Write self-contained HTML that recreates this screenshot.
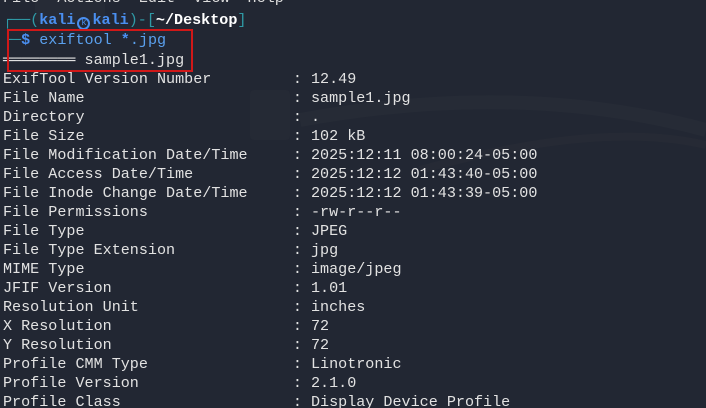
<!DOCTYPE html>
<html><head><meta charset="utf-8"><style>
html,body{margin:0;padding:0;width:706px;height:408px;overflow:hidden;background:#222733;}
body{position:relative;font-family:"Liberation Mono","DejaVu Sans Mono",monospace;font-size:15.1px;color:#e2e2e2;}
.l{position:absolute;left:3px;white-space:pre;line-height:19px;height:19px;}
.t{color:#2f9aa6}.b{color:#4a8ff0;font-weight:bold}.w{color:#fff;font-weight:bold}
.c{color:#5aa0ee}
.at{display:inline-block;width:13px;height:13px;border:2px solid #4a8ff0;border-radius:50%;box-sizing:border-box;vertical-align:-1px;margin:0 2px;font-size:9px;line-height:9px;text-align:center;color:#4a8ff0;}
.box{position:absolute;left:7px;top:29px;width:186px;height:43px;border:2px solid #d01818;box-sizing:border-box;}
.ghost{position:absolute;background:#2a2f3a;border-radius:4px;}
</style></head><body>
<div class="ghost" style="left:35px;top:0;width:70px;height:22px;background:#262b36"></div>
<div class="ghost" style="left:250px;top:90px;width:40px;height:50px;background:#252a35"></div>
<svg style="position:absolute;left:0;top:0" width="706" height="408"><path d="M300 120 Q520 80 706 130" stroke="#262b36" stroke-width="14" fill="none"/><path d="M420 170 Q600 120 706 145" stroke="#262a35" stroke-width="8" fill="none"/></svg>
<div class="l" style="top:-11px;color:#ddd">File  Actions  Edit  View  Help</div>
<div class="l" style="top:11px"><span class="t">┌──(</span><span class="b">kali</span><span class="at">k</span><span class="b">kali</span><span class="t">)-[</span><span class="w">~/Desktop</span><span class="t">]</span></div>
<div class="l" style="top:31px"><span class="t">└─</span><span class="b">$</span> <span class="c">exiftool</span> <span class="b">*</span><span class="c">.jpg</span></div>
<div class="l" style="top:51px">════════ sample1.jpg</div>
<div class="box"></div>
<div class="l" style="top:70px">ExifTool Version Number         : 12.49</div>
<div class="l" style="top:89px">File Name                       : sample1.jpg</div>
<div class="l" style="top:108px">Directory                       : .</div>
<div class="l" style="top:127px">File Size                       : 102 kB</div>
<div class="l" style="top:146px">File Modification Date/Time     : 2025:12:11 08:00:24-05:00</div>
<div class="l" style="top:165px">File Access Date/Time           : 2025:12:12 01:43:40-05:00</div>
<div class="l" style="top:184px">File Inode Change Date/Time     : 2025:12:12 01:43:39-05:00</div>
<div class="l" style="top:203px">File Permissions                : -rw-r--r--</div>
<div class="l" style="top:222px">File Type                       : JPEG</div>
<div class="l" style="top:241px">File Type Extension             : jpg</div>
<div class="l" style="top:260px">MIME Type                       : image/jpeg</div>
<div class="l" style="top:279px">JFIF Version                    : 1.01</div>
<div class="l" style="top:298px">Resolution Unit                 : inches</div>
<div class="l" style="top:317px">X Resolution                    : 72</div>
<div class="l" style="top:336px">Y Resolution                    : 72</div>
<div class="l" style="top:355px">Profile CMM Type                : Linotronic</div>
<div class="l" style="top:374px">Profile Version                 : 2.1.0</div>
<div class="l" style="top:393px">Profile Class                   : Display Device Profile</div>
</body></html>
